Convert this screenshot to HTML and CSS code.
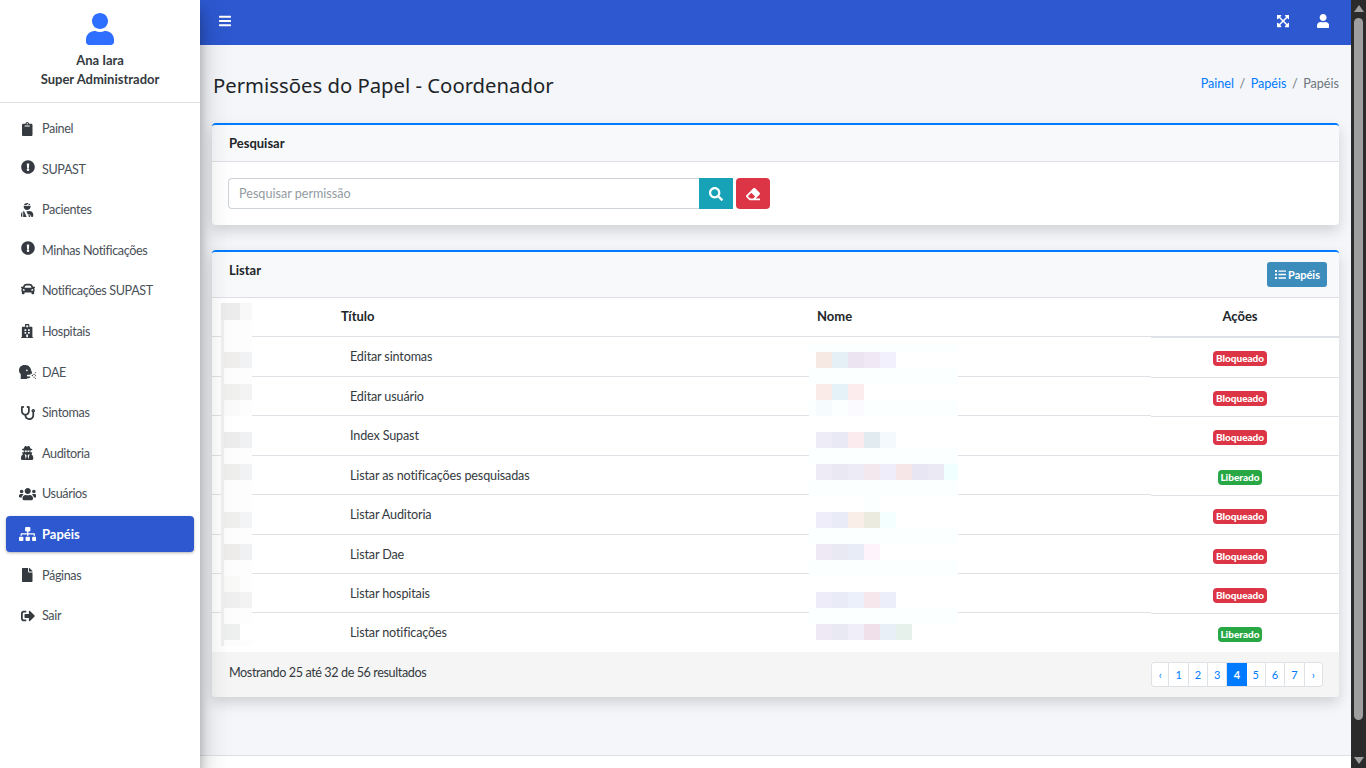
FILE: index.html

```html
<!doctype html>
<html lang="pt-BR">

<head>
  <meta charset="utf-8">
  <title>Permissões do Papel - Coordenador</title>
  <link rel="stylesheet" href="styles.css">
</head>

<body>
  <div class="app">

    <aside class="sidebar">
      <div class="profile">
        <svg class="avatar" viewBox="0 0 448 512"><path d="M224 256c70.7 0 128-57.3 128-128S294.7 0 224 0 96 57.3 96 128s57.3 128 128 128zm89.6 32h-16.7c-22.2 10.2-46.9 16-72.9 16s-50.6-5.8-72.9-16h-16.7C60.2 288 0 348.2 0 422.4V464c0 26.5 21.5 48 48 48h352c26.5 0 48-21.5 48-48v-41.6c0-74.2-60.2-134.4-134.4-134.4z"/></svg>
        <div class="profile-name">Ana Iara</div>
        <div class="profile-name">Super Administrador</div>
      </div>

      <nav class="menu">
        <a class="menu-item" href="#"><span class="menu-icon"><svg class="ico" viewBox="0 0 384 512"><path d="M384 112v352c0 26.51-21.49 48-48 48H48c-26.51 0-48-21.49-48-48V112c0-26.51 21.49-48 48-48h80c0-35.29 28.71-64 64-64s64 28.71 64 64h80c26.51 0 48 21.49 48 48zM192 40c-13.255 0-24 10.745-24 24s10.745 24 24 24 24-10.745 24-24-10.745-24-24-24m96 114v-20a6 6 0 0 0-6-6H102a6 6 0 0 0-6 6v20a6 6 0 0 0 6 6h180a6 6 0 0 0 6-6z"/></svg></span>Painel</a>
        <a class="menu-item" href="#"><span class="menu-icon raised"><svg class="ico" viewBox="0 0 512 512"><path d="M504 256c0 136.997-111.043 248-248 248S8 392.997 8 256C8 119.083 119.043 8 256 8s248 111.083 248 248zm-248 50c-25.405 0-46 20.595-46 46s20.595 46 46 46 46-20.595 46-46-20.595-46-46-46zm-43.673-165.346l7.418 136c.347 6.364 5.609 11.346 11.982 11.346h48.546c6.373 0 11.635-4.982 11.982-11.346l7.418-136c.375-6.874-5.098-12.654-11.982-12.654h-63.383c-6.884 0-12.356 5.78-11.981 12.654z"/></svg></span>SUPAST</a>
        <a class="menu-item" href="#"><span class="menu-icon"><svg class="ico" viewBox="0 0 448 512"><path d="M277.37 11.98C261.08 4.47 243.11 0 224 0c-53.69 0-99.5 33.13-118.51 80h81.19l90.69-68.02zM342.51 80c-7.9-19.47-20.67-36.2-36.49-49.52L239.99 80h102.52zM224 256c70.69 0 128-57.31 128-128 0-5.48-.95-10.7-1.61-16H97.61c-.67 5.3-1.61 10.52-1.61 16 0 70.69 57.31 128 128 128zM80 299.7V512h128.26l-98.45-221.52A132.835 132.835 0 0 0 80 299.7zM0 464c0 26.51 21.49 48 48 48V320.24C19.16 345.7 0 383.2 0 424.93V464zm313.6-176h-16.71c-22.2 10.2-46.88 16-72.89 16-5.49 0-10.81-.49-16.11-.98l-13.17-.97L248.52 416H296c44.11 0 80 35.89 80 80 0 5.57-.58 11.01-1.65 16H400c26.51 0 48-21.49 48-48v-41.6c0-74.23-60.17-134.4-134.4-134.4zM296 448h-32.4l28.44 64H296c26.47 0 48-21.53 48-48 0-8.85-7.15-16-16-16h-32z"/></svg></span>Pacientes</a>
        <a class="menu-item" href="#"><span class="menu-icon raised"><svg class="ico" viewBox="0 0 512 512"><path d="M504 256c0 136.997-111.043 248-248 248S8 392.997 8 256C8 119.083 119.043 8 256 8s248 111.083 248 248zm-248 50c-25.405 0-46 20.595-46 46s20.595 46 46 46 46-20.595 46-46-20.595-46-46-46zm-43.673-165.346l7.418 136c.347 6.364 5.609 11.346 11.982 11.346h48.546c6.373 0 11.635-4.982 11.982-11.346l7.418-136c.375-6.874-5.098-12.654-11.982-12.654h-63.383c-6.884 0-12.356 5.78-11.981 12.654z"/></svg></span>Minhas Notificações</a>
        <a class="menu-item" href="#"><span class="menu-icon raised-some"><svg class="ico" viewBox="0 0 512 512"><path d="M499.99 176h-59.87l-16.64-41.6C406.38 91.63 365.57 64 319.5 64h-127c-46.06 0-86.88 27.63-103.99 70.4L71.87 176H12.01C4.2 176-1.53 183.34.37 190.91l6 24C7.7 220.25 12.5 224 18.01 224h20.07C24.65 235.73 16 252.78 16 272v48c0 16.12 6.16 30.67 16 41.93V416c0 17.67 14.33 32 32 32h32c17.67 0 32-14.33 32-32v-32h256v32c0 17.67 14.33 32 32 32h32c17.67 0 32-14.33 32-32v-54.07c9.84-11.25 16-25.8 16-41.93v-48c0-19.22-8.65-36.27-22.07-48H494c5.51 0 10.31-3.75 11.64-9.09l6-24c1.89-7.57-3.84-14.91-11.65-14.91zm-352.06-17.83c7.29-18.22 24.94-30.17 44.57-30.17h127c19.63 0 37.28 11.95 44.57 30.17L384 208H128l19.93-49.83zM96 319.8c-19.2 0-32-12.76-32-31.9S76.8 256 96 256s48 28.71 48 47.85-28.8 15.95-48 15.95zm320 0c-19.2 0-48 3.19-48-15.95S396.8 256 416 256s32 12.76 32 31.9-12.8 31.9-32 31.9z"/></svg></span>Notificações SUPAST</a>
        <a class="menu-item" href="#"><span class="menu-icon"><svg class="ico" viewBox="0 0 448 512"><path d="M448 492v20H0v-20c0-6.627 5.373-12 12-12h20V120c0-13.255 10.745-24 24-24h88V24c0-13.255 10.745-24 24-24h112c13.255 0 24 10.745 24 24v72h88c13.255 0 24 10.745 24 24v360h20c6.627 0 12 5.373 12 12zM308 192h-40c-6.627 0-12 5.373-12 12v40c0 6.627 5.373 12 12 12h40c6.627 0 12-5.373 12-12v-40c0-6.627-5.373-12-12-12zm-168 64h40c6.627 0 12-5.373 12-12v-40c0-6.627-5.373-12-12-12h-40c-6.627 0-12 5.373-12 12v40c0 6.627 5.373 12 12 12zm104 128h-40c-6.627 0-12 5.373-12 12v84h64v-84c0-6.627-5.373-12-12-12zm64-96h-40c-6.627 0-12 5.373-12 12v40c0 6.627 5.373 12 12 12h40c6.627 0 12-5.373 12-12v-40c0-6.627-5.373-12-12-12zm-116 12c0-6.627-5.373-12-12-12h-40c-6.627 0-12 5.373-12 12v40c0 6.627 5.373 12 12 12h40c6.627 0 12-5.373 12-12v-40zM182 96h26v26a6 6 0 0 0 6 6h20a6 6 0 0 0 6-6V96h26a6 6 0 0 0 6-6V70a6 6 0 0 0-6-6h-26V38a6 6 0 0 0-6-6h-20a6 6 0 0 0-6 6v26h-26a6 6 0 0 0-6 6v20a6 6 0 0 0 6 6z"/></svg></span>Hospitais</a>
        <a class="menu-item" href="#"><span class="menu-icon"><svg class="ico" viewBox="0 0 640 512"><path d="M616,304a24,24,0,1,0-24-24A24,24,0,0,0,616,304ZM552,416a24,24,0,1,0,24,24A24,24,0,0,0,552,416Zm-64-56a24,24,0,1,0,24,24A24,24,0,0,0,488,360ZM616,464a24,24,0,1,0,24,24A24,24,0,0,0,616,464Zm0-104a24,24,0,1,0,24,24A24,24,0,0,0,616,360Zm-64-40a24,24,0,1,0,24,24A24,24,0,0,0,552,320Zm-74.78-45c-21-47.12-48.5-151.75-73.12-186.75A208.13,208.13,0,0,0,234.1,0H192C86,0,0,86,0,192c0,56.75,24.75,107.62,64,142.88V512H288V480h64a64,64,0,0,0,64-64H320a32,32,0,0,1,0-64h96V320h32A32,32,0,0,0,477.22,275ZM288,224a32,32,0,1,1,32-32A32.07,32.07,0,0,1,288,224Z"/></svg></span>DAE</a>
        <a class="menu-item" href="#"><span class="menu-icon"><svg class="ico" viewBox="0 0 512 512"><path d="M447.1 112c-34.2.5-62.3 28.4-63 62.6-.5 24.3 12.5 45.6 32 56.8V344c0 57.3-50.2 104-112 104-60 0-109.2-44.1-111.9-99.2C265 333.8 320 269.2 320 192V36.6c0-11.4-8.1-21.3-19.3-23.5L237.8.5c-13-2.6-25.6 5.8-28.2 18.8L206.4 35c-2.6 13 5.8 25.6 18.8 28.2l30.7 6.1v121.4c0 52.9-42.2 96.7-95.1 97.2-53.4.5-96.9-42.7-96.9-96V69.4l30.7-6.1c13-2.6 21.4-15.2 18.8-28.2l-3.1-15.7C107.7 6.4 95.1-2 82.1.6L19.3 13C8.1 15.3 0 25.1 0 36.6V192c0 77.3 55.1 142 128.1 156.8C130.7 439.2 208.6 512 304 512c97 0 176-75.4 176-168V231.4c19.1-11.1 32-31.7 32-55.4 0-35.7-29.2-64.5-64.9-64zm.9 80c-8.8 0-16-7.2-16-16s7.2-16 16-16 16 7.2 16 16-7.2 16-16 16z"/></svg></span>Sintomas</a>
        <a class="menu-item" href="#"><span class="menu-icon"><svg class="ico" viewBox="0 0 448 512"><path d="M383.9 308.3l23.9-62.6c4-10.5-3.7-21.7-15-21.7h-58.5c11-18.9 17.8-40.6 17.8-64v-.3c39.2-7.8 64-19.1 64-31.7 0-13.3-27.3-25.1-70.1-33-9.2-32.8-27-65.8-40.6-82.8-9.5-11.9-25.9-15.6-39.5-8.8l-27.6 13.8c-9 4.5-19.6 4.5-28.6 0L182.1 3.4c-13.6-6.8-30-3.1-39.5 8.8-13.5 17-31.4 50-40.6 82.8-42.7 7.9-70 19.7-70 33 0 12.6 24.8 23.9 64 31.7v.3c0 23.4 6.8 45.1 17.8 64H56.3c-11.5 0-19.2 11.7-14.7 22.3l25.8 60.2C27.3 329.8 0 372.7 0 422.4v44.8C0 491.9 20.1 512 44.8 512h358.4c24.7 0 44.8-20.1 44.8-44.8v-44.8c0-48.4-25.8-90.4-64.1-114.1zM176 480l-41.6-192 49.6 32 24 40-32 120zm96 0l-32-120 24-40 49.6-32L272 480zm41.7-298.5c-3.9 11.9-7 24.6-16.5 33.4-10.1 9.3-48 22.4-64-25-2.8-8.4-15.4-8.4-18.3 0-17 50.2-56 32.4-64 25-9.5-8.8-12.7-21.5-16.5-33.4-.8-2.5-6.3-5.7-6.3-5.8v-10.8c28.3 3.6 61 5.8 96 5.8s67.7-2.1 96-5.8v10.8c-.1.1-5.6 3.2-6.4 5.8z"/></svg></span>Auditoria</a>
        <a class="menu-item" href="#"><span class="menu-icon"><svg class="ico" viewBox="0 0 640 512"><path d="M96 224c35.3 0 64-28.7 64-64s-28.7-64-64-64-64 28.7-64 64 28.7 64 64 64zm448 0c35.3 0 64-28.7 64-64s-28.7-64-64-64-64 28.7-64 64 28.7 64 64 64zm32 32h-64c-17.6 0-33.5 7.1-45.1 18.6 40.3 22.1 68.9 62 75.1 109.4h66c17.7 0 32-14.3 32-32v-32c0-35.3-28.7-64-64-64zm-256 0c61.9 0 112-50.1 112-112S381.9 32 320 32 208 82.1 208 144s50.1 112 112 112zm76.8 32h-8.3c-20.8 10-43.9 16-68.5 16s-47.6-6-68.5-16h-8.3C179.6 288 128 339.6 128 403.2V432c0 26.5 21.5 48 48 48h288c26.5 0 48-21.5 48-48v-28.8c0-63.6-51.6-115.2-115.2-115.2zm-223.7-13.4C161.5 263.1 145.6 256 128 256H64c-35.3 0-64 28.7-64 64v32c0 17.7 14.3 32 32 32h65.9c6.3-47.4 34.9-87.3 75.2-109.4z"/></svg></span>Usuários</a>
        <a class="menu-item active" href="#"><span class="menu-icon"><svg class="ico" viewBox="0 0 640 512"><path d="M128 352H32c-17.67 0-32 14.33-32 32v96c0 17.67 14.33 32 32 32h96c17.67 0 32-14.33 32-32v-96c0-17.67-14.33-32-32-32zm-24-80h192v48h48v-48h192v48h48v-57.59c0-21.17-17.23-38.41-38.41-38.41H344v-64h40c17.67 0 32-14.33 32-32V32c0-17.67-14.33-32-32-32H256c-17.67 0-32 14.33-32 32v96c0 17.67 14.33 32 32 32h40v64H94.41C73.23 224 56 241.23 56 262.41V320h48v-48zm264 80h-96c-17.67 0-32 14.33-32 32v96c0 17.67 14.33 32 32 32h96c17.67 0 32-14.33 32-32v-96c0-17.67-14.33-32-32-32zm240 0h-96c-17.67 0-32 14.33-32 32v96c0 17.67 14.33 32 32 32h96c17.67 0 32-14.33 32-32v-96c0-17.67-14.33-32-32-32z"/></svg></span>Papéis</a>
        <a class="menu-item" href="#"><span class="menu-icon"><svg class="ico" viewBox="0 0 384 512"><path d="M224 136V0H24C10.7 0 0 10.7 0 24v464c0 13.3 10.7 24 24 24h336c13.3 0 24-10.7 24-24V160H248c-13.2 0-24-10.8-24-24zm160-14.1v6.1H256V0h6.1c6.4 0 12.5 2.5 17 7l97.9 98c4.5 4.5 7 10.6 7 16.9z"/></svg></span>Páginas</a>
        <a class="menu-item" href="#"><span class="menu-icon"><svg class="ico" viewBox="0 0 512 512"><path d="M497 273L329 441c-15 15-41 4.5-41-17v-96H152c-13.3 0-24-10.7-24-24v-96c0-13.3 10.7-24 24-24h136V88c0-21.4 25.9-32 41-17l168 168c9.3 9.4 9.3 24.6 0 34zM192 436v-40c0-6.6-5.4-12-12-12H96c-17.7 0-32-14.3-32-32V160c0-17.7 14.3-32 32-32h84c6.6 0 12-5.4 12-12V76c0-6.6-5.4-12-12-12H96c-53 0-96 43-96 96v192c0 53 43 96 96 96h84c6.6 0 12-5.4 12-12z"/></svg></span>Sair</a>
      </nav>
    </aside>

    <div class="main">
      <header class="topbar">
        <svg class="ico topbar-toggle" viewBox="0 0 448 512"><path d="M16 132h416c8.837 0 16-7.163 16-16V76c0-8.837-7.163-16-16-16H16C7.163 60 0 67.163 0 76v40c0 8.837 7.163 16 16 16zm0 160h416c8.837 0 16-7.163 16-16v-40c0-8.837-7.163-16-16-16H16c-8.837 0-16 7.163-16 16v40c0 8.837 7.163 16 16 16zm0 160h416c8.837 0 16-7.163 16-16v-40c0-8.837-7.163-16-16-16H16c-8.837 0-16 7.163-16 16v40c0 8.837 7.163 16 16 16z"/></svg>
        <div class="topbar-right">
          <svg class="ico" viewBox="0 0 448 512"><path d="M448 344v112a23.94 23.94 0 0 1-24 24H312c-21.39 0-32.09-25.9-17-41l36.2-36.2L224 295.6 116.77 402.9 153 439c15.09 15.1 4.39 41-17 41H24a23.94 23.94 0 0 1-24-24V344c0-21.4 25.89-32.1 41-17l36.19 36.2L184.46 256 77.18 148.7 41 185c-15.1 15.1-41 4.4-41-17V56a23.94 23.94 0 0 1 24-24h112c21.39 0 32.09 25.9 17 41l-36.2 36.2L224 216.4l107.23-107.3L295 73c-15.09-15.1-4.39-41 17-41h112a23.94 23.94 0 0 1 24 24v112c0 21.4-25.89 32.1-41 17l-36.19-36.2L263.54 256l107.28 107.3L407 327.1c15.1-15.2 41-4.5 41 16.9z"/></svg>
          <svg class="ico" viewBox="0 0 448 512"><path d="M224 256c70.7 0 128-57.3 128-128S294.7 0 224 0 96 57.3 96 128s57.3 128 128 128zm89.6 32h-16.7c-22.2 10.2-46.9 16-72.9 16s-50.6-5.8-72.9-16h-16.7C60.2 288 0 348.2 0 422.4V464c0 26.5 21.5 48 48 48h352c26.5 0 48-21.5 48-48v-41.6c0-74.2-60.2-134.4-134.4-134.4z"/></svg>
        </div>
      </header>

      <main class="content">
        <div class="page-head">
          <h1>Permissões do Papel - Coordenador</h1>
          <ol class="breadcrumb">
            <li><a href="#">Painel</a></li>
            <li class="sep">/</li>
            <li><a href="#">Papéis</a></li>
            <li class="sep">/</li>
            <li class="current">Papéis</li>
          </ol>
        </div>

        <section class="card card-search">
          <div class="card-head">
            <h3>Pesquisar</h3>
          </div>
          <form class="search">
            <input class="search-input" type="text" placeholder="Pesquisar permissão">
            <button class="btn btn-info" type="button"><svg class="ico" viewBox="0 0 512 512"><path d="M505 442.7L405.3 343c-4.5-4.5-10.6-7-17-7H372c27.6-35.3 44-79.7 44-128C416 93.1 322.9 0 208 0S0 93.1 0 208s93.1 208 208 208c48.3 0 92.7-16.4 128-44v16.3c0 6.4 2.5 12.5 7 17l99.7 99.7c9.4 9.4 24.6 9.4 33.9 0l28.3-28.3c9.4-9.4 9.4-24.6.1-34zM208 336c-70.7 0-128-57.2-128-128 0-70.7 57.2-128 128-128 70.7 0 128 57.2 128 128 0 70.7-57.2 128-128 128z"/></svg></button>
            <button class="btn btn-danger" type="button"><svg class="ico" viewBox="0 0 512 512"><path d="M497.941 273.941c18.745-18.745 18.745-49.137 0-67.882l-160-160c-18.745-18.745-49.136-18.746-67.883 0l-256 256c-18.745 18.745-18.745 49.137 0 67.882l96 96A48.004 48.004 0 0 0 144 480h356c6.627 0 12-5.373 12-12v-40c0-6.627-5.373-12-12-12H355.883l142.058-142.059zm-302.627-62.627l137.373 137.373L265.373 416H150.628l-80-80 124.686-124.686z"/></svg></button>
          </form>
        </section>

        <section class="card card-list">
          <div class="card-head">
            <h3>Listar</h3>
            <a class="btn-papeis" href="#"><svg class="ico" viewBox="0 0 512 512"><path d="M80 368H16a16 16 0 0 0-16 16v64a16 16 0 0 0 16 16h64a16 16 0 0 0 16-16v-64a16 16 0 0 0-16-16zm0-320H16A16 16 0 0 0 0 64v64a16 16 0 0 0 16 16h64a16 16 0 0 0 16-16V64a16 16 0 0 0-16-16zm0 160H16a16 16 0 0 0-16 16v64a16 16 0 0 0 16 16h64a16 16 0 0 0 16-16v-64a16 16 0 0 0-16-16zm416 176H176a16 16 0 0 0-16 16v32a16 16 0 0 0 16 16h320a16 16 0 0 0 16-16v-32a16 16 0 0 0-16-16zm0-320H176a16 16 0 0 0-16 16v32a16 16 0 0 0 16 16h320a16 16 0 0 0 16-16V80a16 16 0 0 0-16-16zm0 160H176a16 16 0 0 0-16 16v32a16 16 0 0 0 16 16h320a16 16 0 0 0 16-16v-32a16 16 0 0 0-16-16z"/></svg>Papéis</a>
          </div>

          <div class="table-wrap">
            <table class="perms">
              <thead>
                <tr>
                  <th class="col-title">Título</th>
                  <th>Nome</th>
                  <th class="col-actions thick">Ações</th>
                </tr>
              </thead>
              <tbody>
                <tr class="tall"><td class="col-title">Editar sintomas</td><td></td><td class="col-actions low"><span class="badge red">Bloqueado</span></td></tr>
                <tr><td class="col-title">Editar usuário</td><td></td><td class="col-actions low"><span class="badge red">Bloqueado</span></td></tr>
                <tr class="tall"><td class="col-title">Index Supast</td><td></td><td class="col-actions"><span class="badge red">Bloqueado</span></td></tr>
                <tr><td class="col-title">Listar as notificações pesquisadas</td><td></td><td class="col-actions low"><span class="badge green">Liberado</span></td></tr>
                <tr class="tall"><td class="col-title">Listar Auditoria</td><td></td><td class="col-actions"><span class="badge red">Bloqueado</span></td></tr>
                <tr><td class="col-title">Listar Dae</td><td></td><td class="col-actions"><span class="badge red">Bloqueado</span></td></tr>
                <tr><td class="col-title">Listar hospitais</td><td></td><td class="col-actions low"><span class="badge red">Bloqueado</span></td></tr>
                <tr><td class="col-title">Listar notificações</td><td></td><td class="col-actions"><span class="badge green">Liberado</span></td></tr>
              </tbody>
            </table>

            <!-- pixelated ids and names; coordinates are page pixels -->
            <svg class="redacted" viewBox="212 298 1127 354">
              <rect x="221" y="303" width="31" height="343" fill="#fdfdfd"/>
              <rect x="221" y="303" width="3" height="343" fill="#f0f0f0"/>
              <rect x="221" y="303" width="19" height="17" fill="#ececec"/><rect x="240" y="303" width="12" height="17" fill="#f8f8f8"/>
              <rect x="224" y="352" width="16" height="16" fill="#efeeec"/><rect x="240" y="352" width="12" height="16" fill="#f1f2f4"/>
              <rect x="224" y="384" width="16" height="16" fill="#f0f0ee"/><rect x="240" y="384" width="12" height="16" fill="#f3f3f3"/>
              <rect x="224" y="400" width="16" height="16" fill="#fafafa"/>
              <rect x="224" y="416" width="28" height="16" fill="#ffffff"/>
              <rect x="224" y="432" width="16" height="16" fill="#ececec"/><rect x="240" y="432" width="12" height="16" fill="#f0f1f3"/>
              <rect x="224" y="464" width="16" height="16" fill="#eeeeec"/><rect x="240" y="464" width="12" height="16" fill="#f0f2f3"/>
              <rect x="224" y="512" width="16" height="16" fill="#efefed"/><rect x="240" y="512" width="12" height="16" fill="#f3f4f5"/>
              <rect x="224" y="544" width="16" height="16" fill="#eeecea"/><rect x="240" y="544" width="12" height="16" fill="#f0f1f3"/>
              <rect x="224" y="576" width="16" height="16" fill="#f9f9f7"/>
              <rect x="224" y="592" width="16" height="16" fill="#efefef"/><rect x="240" y="592" width="12" height="16" fill="#f3f3f3"/>
              <rect x="224" y="624" width="16" height="16" fill="#edf0ef"/><rect x="240" y="624" width="12" height="16" fill="#ffffff"/>

              <rect x="809" y="345" width="149" height="7" fill="#fbffff"/>
              <rect x="809" y="368" width="149" height="16" fill="#fbffff"/>
              <rect x="809" y="400" width="149" height="16" fill="#fbffff"/>
              <rect x="809" y="448" width="149" height="16" fill="#fbffff"/>
              <rect x="809" y="480" width="149" height="16" fill="#fbffff"/>
              <rect x="864" y="496" width="16" height="16" fill="#fbffff"/>
              <rect x="809" y="528" width="149" height="16" fill="#fbffff"/>
              <rect x="809" y="560" width="149" height="16" fill="#fbffff"/>
              <rect x="809" y="608" width="149" height="16" fill="#fbffff"/>

              <rect x="816" y="352" width="16" height="16" fill="#f6e9e3"/><rect x="832" y="352" width="16" height="16" fill="#e4f0f5"/><rect x="848" y="352" width="16" height="16" fill="#ece4f0"/><rect x="864" y="352" width="16" height="16" fill="#f0e9f5"/><rect x="880" y="352" width="16" height="16" fill="#f1f0fc"/>
              <rect x="816" y="384" width="16" height="16" fill="#fbebe8"/><rect x="832" y="384" width="16" height="16" fill="#e5f2f7"/><rect x="848" y="384" width="16" height="16" fill="#fdecee"/>
              <rect x="816" y="400" width="16" height="16" fill="#f6fbfe"/><rect x="848" y="400" width="16" height="16" fill="#fafaff"/>
              <rect x="816" y="432" width="16" height="16" fill="#eeecf6"/><rect x="832" y="432" width="16" height="16" fill="#e9e9f5"/><rect x="848" y="432" width="16" height="16" fill="#fcebee"/><rect x="864" y="432" width="16" height="16" fill="#e1ebf0"/><rect x="880" y="432" width="16" height="16" fill="#f4f9fe"/>
              <rect x="816" y="464" width="16" height="16" fill="#eeebf6"/><rect x="832" y="464" width="16" height="16" fill="#e9e8f3"/><rect x="848" y="464" width="16" height="16" fill="#ecebf6"/><rect x="864" y="464" width="16" height="16" fill="#f2e8ee"/><rect x="880" y="464" width="16" height="16" fill="#efedfa"/><rect x="896" y="464" width="16" height="16" fill="#f6e6e7"/><rect x="912" y="464" width="16" height="16" fill="#e8e6f2"/><rect x="928" y="464" width="16" height="16" fill="#ebeaf4"/><rect x="944" y="464" width="14" height="16" fill="#f0ffff"/>
              <rect x="816" y="512" width="16" height="16" fill="#efedfa"/><rect x="832" y="512" width="16" height="16" fill="#e9ecf7"/><rect x="848" y="512" width="16" height="16" fill="#f9eee8"/><rect x="864" y="512" width="16" height="16" fill="#ecebe0"/><rect x="880" y="512" width="16" height="16" fill="#f4ffff"/>
              <rect x="816" y="544" width="16" height="16" fill="#efe9f5"/><rect x="832" y="544" width="16" height="16" fill="#e9e9f4"/><rect x="848" y="544" width="16" height="16" fill="#e7ecf6"/><rect x="864" y="544" width="16" height="16" fill="#fff3fb"/>
              <rect x="816" y="592" width="16" height="16" fill="#efecfa"/><rect x="832" y="592" width="16" height="16" fill="#e9ecf7"/><rect x="848" y="592" width="16" height="16" fill="#ecf0fa"/><rect x="864" y="592" width="16" height="16" fill="#f5e7eb"/><rect x="880" y="592" width="16" height="16" fill="#eceffa"/>
              <rect x="816" y="624" width="16" height="16" fill="#efe9f5"/><rect x="832" y="624" width="16" height="16" fill="#e9e9f4"/><rect x="848" y="624" width="16" height="16" fill="#efeef9"/><rect x="864" y="624" width="16" height="16" fill="#efe0ea"/><rect x="880" y="624" width="16" height="16" fill="#e9eff7"/><rect x="896" y="624" width="16" height="16" fill="#e6f1ec"/>
            </svg>
          </div>

          <div class="card-foot">
            <span>Mostrando 25 até 32 de 56 resultados</span>
            <ul class="pager">
              <li class="edge"><a href="#">‹</a></li>
              <li><a href="#">1</a></li>
              <li><a href="#">2</a></li>
              <li><a href="#">3</a></li>
              <li class="active"><a href="#">4</a></li>
              <li><a href="#">5</a></li>
              <li><a href="#">6</a></li>
              <li><a href="#">7</a></li>
              <li class="edge"><a href="#">›</a></li>
            </ul>
          </div>
        </section>
      </main>

      <footer class="page-foot"></footer>
    </div>

    <div class="scrollbar">
      <span class="arrow-up"></span>
      <span class="thumb"></span>
      <span class="arrow-down"></span>
    </div>

  </div>
</body>

</html>
```

FILE: styles.css

```css
* { box-sizing:border-box; }
html, body { margin:0; height:768px; overflow:hidden; }
body { font-family:Lato,"Noto Sans",sans-serif; font-size:12.6px; color:#212529; background-color:#f4f6f9; }
a { text-decoration:none; }
.ico { display:block; fill:currentColor; height:14px; }

.app { display:flex; height:768px; }

/* sidebar */
.sidebar { flex:0 0 200px; background-color:#fff; position:relative; z-index:2; box-shadow:0 14px 28px rgba(0,0,0,.25), 0 10px 10px rgba(0,0,0,.22); }
.profile { height:103px; padding-top:13px; border-bottom:1px solid #dee2e6; text-align:center; }
.avatar { display:block; width:28px; height:32px; margin:0 auto 6px; fill:#2f6fff; }
.profile-name { font-size:13px; font-weight:700; line-height:19px; color:#343a40; }
.menu { display:flex; flex-direction:column; gap:4.6px; padding:7.5px 6px 0; }
.menu-item { display:flex; align-items:center; height:36px; padding-left:10.5px; border-radius:4px; color:#495057; letter-spacing:-.37px; }
.menu-item .ico { color:#343a40; }
.menu-icon { flex:0 0 22px; display:flex; justify-content:center; margin-right:3.5px; }
.raised { margin-top:-5px; }
.raised-some { margin-top:-3px; }
.menu-item.active { background-color:#2d58cf; color:#fff; font-size:13px; font-weight:700; letter-spacing:0; box-shadow:0 1px 3px rgba(0,0,0,.3); }
.menu-item.active .ico { color:#fff; }

/* main column */
.main { flex:1; min-width:0; display:flex; flex-direction:column; }
.topbar { flex:0 0 45px; display:flex; align-items:center; justify-content:space-between; padding:0 22px 3px 19px; background-color:#2d58cf; color:#fff; }
.topbar-toggle { width:12px; }
.topbar-right { display:flex; gap:28px; }
.content { flex:1; padding:0 12px; }
.page-foot { flex:0 0 13px; background-color:#fff; border-top:1px solid #dee2e6; }

.page-head { display:flex; justify-content:space-between; align-items:center; height:78px; }
h1 { margin:0 0 0 1px; font-family:"Noto Sans",sans-serif; font-size:20.3px; font-weight:400; line-height:28px; padding-top:2px; }
.breadcrumb { display:flex; gap:5.5px; margin:0 0 2px; padding:0; list-style:none; }
.breadcrumb a { color:#007bff; }
.breadcrumb .sep, .breadcrumb .current { color:#6c757d; }

/* cards */
.card { background-color:#fff; border-top:2px solid #007bff; border-radius:4px; margin-bottom:25px; box-shadow:0 6px 14px rgba(0,0,0,.15); position:relative; }
.card-head { display:flex; justify-content:space-between; background-color:#f8f9fa; border-bottom:1px solid #dee2e6; border-radius:4px 4px 0 0; padding:0 12px 0 17px; }
.card-search .card-head { height:37px; align-items:center; }
.card-list .card-head { height:46px; align-items:flex-start; }
h3 { margin:0; font-size:13px; font-weight:700; line-height:18px; }
.card-list h3 { margin-top:9px; }

.search { display:flex; padding:16px 16px 16px; }
.search-input { width:471px; height:31px; padding:0 10px; border:1px solid #ced4da; border-right:0; border-radius:4px 0 0 4px; font:inherit; color:#495057; outline:none; }
.search-input::placeholder { color:#939ba2; }
.btn { display:flex; align-items:center; justify-content:center; width:34px; height:31px; padding:0; border:0; color:#fff; }
.btn-info { background-color:#17a2b8; }
.btn-danger { background-color:#dc3545; border-radius:4px; margin-left:3px; }

.btn-papeis { display:flex; align-items:center; gap:2px; height:25px; margin-top:10px; padding:0 7px 0 8px; border-radius:3px; background-color:#3c8dbc; color:#fff; font-size:11px; font-weight:700; }
.btn-papeis .ico { height:11px; }

/* table */
.table-wrap { position:relative; }
.perms { width:100%; border-collapse:separate; border-spacing:0; table-layout:fixed; letter-spacing:-.15px; }
.perms th, .perms td { height:39px; padding:0 0 0 8px; border-bottom:1px solid #dee2e6; text-align:left; font-weight:400; }
.perms th { font-size:13px; font-weight:700; letter-spacing:0; padding-bottom:2px; }
.perms tr.tall td { height:40px; }
.perms tbody tr:last-child td { border-bottom:0; }
.perms .col-title { width:597px; padding-left:129px; }
.perms td.col-title { padding-left:138px; color:#343a40; }
.perms .col-actions { width:188px; padding:0 10px 2px 0; text-align:center; }
.perms td.col-actions { padding:3px 10px 0 0; }
.perms .low { border-bottom-color:transparent; box-shadow:0 1px 0 #dee2e6; }
.perms .thick { box-shadow:0 1px 0 #dee2e6; }
.badge { display:inline-block; height:15px; padding:0 2.5px; border-radius:4px; color:#fff; font-size:10px; font-weight:900; line-height:14px; letter-spacing:0; }
.red { background-color:#dc3545; }
.green { background-color:#28a745; }
.redacted { position:absolute; top:0; left:0; width:1127px; height:354px; }

.card-foot { display:flex; justify-content:space-between; align-items:center; height:45px; padding:0 16px 5px 17px; background-color:#f5f5f5; border-radius:0 0 4px 4px; color:#343a40; }
.card-foot > span { letter-spacing:-.4px; }
.pager { display:flex; margin:5px 0 0; padding:0; list-style:none; background-color:#fff; border:1px solid #dee2e6; border-radius:3px; font-size:11px; }
.pager a { display:block; width:19.3px; height:23px; line-height:23px; text-align:center; color:#007bff; border-right:1px solid #dee2e6; }
.pager .edge a { width:17.5px; }
.pager li:last-child a { border-right:0; }
.pager .active a { background-color:#007bff; color:#fff; font-weight:700; border-right:0; }

/* the browser scrollbar, as photographed */
.scrollbar { flex:0 0 15px; display:flex; flex-direction:column; align-items:center; background-color:#2b2b2b; padding:5px 0 4px; position:relative; z-index:3; }
.thumb { width:9px; height:703px; margin:6px 0 37px; border-radius:5px; background-color:#9f9f9f; }
.arrow-up { border:solid transparent; border-width:0 5px 7px; border-bottom-color:#9f9f9f; }
.arrow-down { border:solid transparent; border-width:7px 5px 0; border-top-color:#9f9f9f; }
```
